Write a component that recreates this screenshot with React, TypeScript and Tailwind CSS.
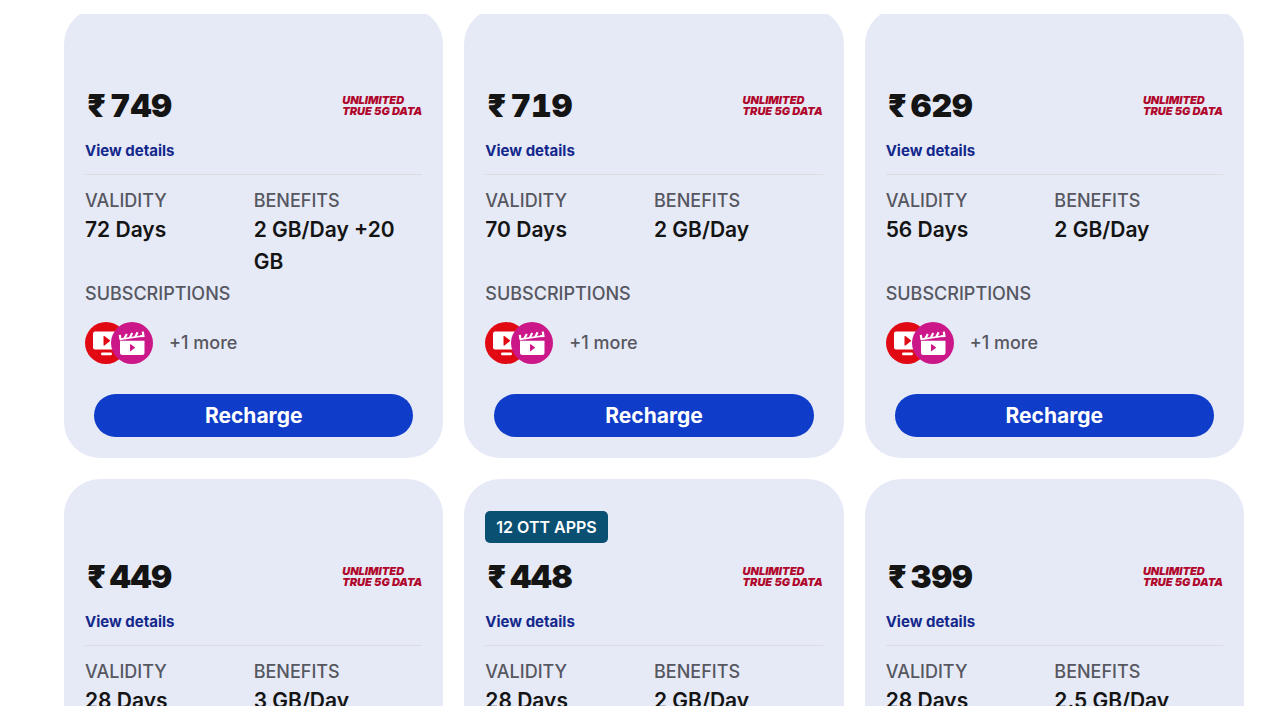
type Plan = {
  price: string;
  validity: string;
  benefits: string;
  tag?: string;
};

const PLANS: Plan[] = [
  { price: "749", validity: "72 Days", benefits: "2 GB/Day +20 GB" },
  { price: "719", validity: "70 Days", benefits: "2 GB/Day" },
  { price: "629", validity: "56 Days", benefits: "2 GB/Day" },
  { price: "449", validity: "28 Days", benefits: "3 GB/Day" },
  { price: "448", validity: "28 Days", benefits: "2 GB/Day", tag: "12 OTT APPS" },
  { price: "399", validity: "28 Days", benefits: "2.5 GB/Day" },
];

function TvIcon() {
  return (
    <svg viewBox="0 0 42 42" className="size-[42px]" aria-hidden="true">
      <circle cx="21" cy="21" r="21" fill="#e10a14" />
      <rect x="8" y="9.5" width="27" height="18" rx="2" fill="#fff" />
      <rect x="16" y="30.5" width="11" height="2.8" rx="1.4" fill="#fff" />
      <path d="M18.5 14.5v8.4a.6.6 0 0 0 .95.5l5.4-4.2a.6.6 0 0 0 0-.96l-5.4-4.2a.6.6 0 0 0-.95.46z" fill="#e10a14" />
    </svg>
  );
}

function ClapperIcon() {
  return (
    <svg viewBox="0 0 42 42" className="-ml-4 size-[42px]" aria-hidden="true">
      <circle cx="21" cy="21" r="21" fill="#cb1788" />
      <path d="M8.5 17.4L33 13.8" stroke="#fff" strokeWidth="1.6" />
      <path
        d="M8.8 12.9l.6 4M15.8 11.9l-2.4 4.6M21.2 11.1l-2.4 4.6M26.6 10.3l-2.4 4.6M31.8 9.6l.6 4.4l-3.2.2"
        fill="none"
        stroke="#fff"
        strokeWidth="2.2"
      />
      <path d="M9 18.8h24.5v11.7a2.5 2.5 0 0 1-2.5 2.5h-19.5a2.5 2.5 0 0 1-2.5-2.5z" fill="#fff" />
      <path d="M19 22.7v6a.5.5 0 0 0 .8.4l4-3a.5.5 0 0 0 0-.8l-4-3a.5.5 0 0 0-.8.4z" fill="#cb1788" />
    </svg>
  );
}

function PlanCard({ plan }: { plan: Plan }) {
  return (
    <article className="flex flex-col rounded-[36px] bg-[#e6eaf7] px-[21px] pt-8 pb-[21px]">
      <div className="flex h-8">
        {plan.tag && (
          <span className="flex items-center rounded-[5px] bg-[#0a5073] px-[11px] text-base font-semibold text-white">
            {plan.tag}
          </span>
        )}
      </div>

      <div className="mt-4 flex items-center justify-between">
        <h2 className="ml-0.5 flex gap-1 text-[32px] leading-9 font-black tabular-nums">
          <span>₹</span>
          <span>{plan.price}</span>
        </h2>
        <p className="text-[11px] leading-[11px] font-black text-[#b0082c] italic">
          UNLIMITED
          <br />
          TRUE 5G DATA
        </p>
      </div>

      <a href="#details" className="mt-4 self-start text-[15px] leading-[22px] font-bold text-[#14288c]">
        View details
      </a>

      <dl className="mt-3 grid grid-cols-2 border-t border-[#dcdde0] pt-3.5">
        <div>
          <dt className="text-lg leading-6 font-medium text-[#56575f]">VALIDITY</dt>
          <dd className="mt-px min-h-16 text-[21px] leading-8 font-semibold">{plan.validity}</dd>
        </div>
        <div>
          <dt className="text-lg leading-6 font-medium text-[#56575f]">BENEFITS</dt>
          <dd className="mt-px min-h-16 text-[21px] leading-8 font-semibold">{plan.benefits}</dd>
        </div>
      </dl>

      <h3 className="mt-1 text-lg leading-6 font-medium text-[#56575f]">SUBSCRIPTIONS</h3>
      <div className="mt-4 flex items-center">
        <TvIcon />
        <ClapperIcon />
        <span className="ml-4 text-lg font-medium text-[#56575f]">+1 more</span>
      </div>

      <button
        type="button"
        className="mx-[9px] mt-[30px] h-[43px] rounded-full bg-[#0f3cc9] text-[21px] font-bold text-white"
      >
        Recharge
      </button>
    </article>
  );
}

export default function App() {
  return (
    <div className="h-screen bg-white py-3.5 font-[Inter,sans-serif] text-[#141414]">
      <main className="h-full overflow-hidden pr-9 pl-16">
        <div className="-mt-1.5 grid grid-cols-3 gap-[21px]">
          {PLANS.map((plan) => (
            <PlanCard key={plan.price} plan={plan} />
          ))}
        </div>
      </main>
    </div>
  );
}
